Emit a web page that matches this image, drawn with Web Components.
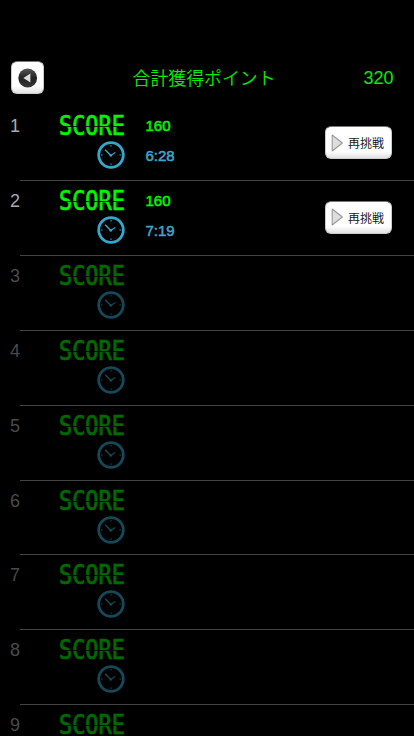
<!DOCTYPE html>
<html lang="ja"><head><meta charset="utf-8"><title>合計獲得ポイント</title>
<style>html,body{margin:0;background:#000;height:736px;overflow:hidden}</style></head><body>
<score-screen></score-screen>
<script>
const define=(name,html,setup)=>customElements.define(name,class extends HTMLElement{
  connectedCallback(){
    if(this.shadowRoot)return;
    const t=document.createElement('template');t.innerHTML=html;
    this.attachShadow({mode:'open'}).append(t.content.cloneNode(true));
    if(setup)setup(this,this.shadowRoot);
  }
});
define('glossy-button',`<style>
:host{display:flex;box-sizing:border-box;height:33px;align-items:center;border-radius:6px;border:1px solid #ccc;border-top-color:#777;background:linear-gradient(#fff 78%,#e2e2e2);color:#1a1a1a}
</style><slot></slot>`);
define('back-icon',`<style>:host{display:block;width:20px;height:20px}svg{display:block}</style>
<svg width="20" height="20"><defs><linearGradient id="b" x2="0" y2="1"><stop stop-color="#555"/><stop offset=".5" stop-color="#222"/><stop offset="1" stop-color="#383838"/></linearGradient></defs><circle cx="9.7" cy="10" r="9.4" fill="url(#b)"/><path d="M5.4 10 12.4 5.4V14.6Z" fill="#ddd"/></svg>`);
define('play-icon',`<style>:host{display:block;width:12px;height:18px}svg{display:block}</style>
<svg width="12" height="18"><path d="M1.2 1V17L11.4 9Z" fill="#ddd" stroke="#999" stroke-width="1.1" stroke-linejoin="round"/></svg>`);
define('clock-icon',`<style>:host{display:block;width:28px;height:28px}svg{display:block}</style>
<svg width="28" height="28" fill="none" stroke="#32a8cc"><circle cx="14" cy="14" r="12.3" stroke-width="2.8"/><path d="M14 4V5.6M14 22.4V24M4 14H5.6M22.4 14H24" stroke-width="1"/><path d="M8.1 8.7 13.8 14.6" stroke-width="1.4"/><path d="M13.6 14.6 18.3 11.6" stroke-width="1.2"/><circle cx="13.8" cy="14.5" r="1.3" fill="#32a8cc" stroke="none"/></svg>`);
define('lcd-label',`<style>
:host{display:block;width:72px;height:33px;margin:-5px 0 -6px;position:relative;color:#00f600}
span{display:block;width:max-content;font:400 26.4px/33px "DejaVu Sans Mono",monospace;-webkit-text-stroke:.7px currentColor;transform:scaleX(.83);transform-origin:0 0;white-space:nowrap}
:host::after{content:"";position:absolute;inset:0;background:linear-gradient(#000,#000) 0 17px/100% .8px no-repeat}
</style><span><slot></slot></span>`);
define('score-row',`<style>
:host{display:grid;box-sizing:border-box;height:74.92px;grid-template-columns:59px 86px 180px 67px;position:relative;font-family:"Liberation Sans",Arial,sans-serif}
:host::after{content:"";position:absolute;left:20px;right:0;bottom:-1px;height:1px;background:#444}
.rank{padding:11px 0 0 10px;font-size:18px;line-height:20px;color:#aaa}
.labels{padding-top:9px;display:flex;flex-direction:column;gap:5px}
clock-icon{margin-left:37.5px}
.vals{padding:11px 0 0 .5px;-webkit-text-stroke:.55px currentColor;font-size:15px;line-height:20px;display:flex;flex-direction:column;gap:10px}
.pts{color:#00f600}.time{color:#3aa7c8}
.act{padding-top:21px}
glossy-button{padding-left:5px;gap:5px;font:12px "Noto Sans CJK JP",sans-serif;white-space:nowrap}
:host([empty]) .rank{color:#4a4a4a}
:host([empty]) .labels{opacity:.43}
</style><div class="rank"></div><div class="labels"><lcd-label>SCORE</lcd-label><clock-icon></clock-icon></div>
<div class="vals"><div class="pts"></div><div class="time"></div></div>
<div class="act"><glossy-button><play-icon></play-icon><span>再挑戦</span></glossy-button></div>`,(h,s)=>{
  s.querySelector('.rank').textContent=h.getAttribute('rank');
  if(h.hasAttribute('points')){
    s.querySelector('.pts').textContent=h.getAttribute('points');
    s.querySelector('.time').textContent=h.getAttribute('time');
  }else{h.setAttribute('empty','');s.querySelector('.vals').remove();s.querySelector('.act').remove()}
});
define('score-header',`<style>
:host{display:grid;grid-template-columns:120px 1fr 120px;align-items:center;height:55px;padding-top:50px;color:#00f000;font:18px/28px "Liberation Sans","Noto Sans CJK JP",sans-serif}
glossy-button{width:33px;justify-content:center;margin-left:11px}
.title{font-family:"Noto Sans CJK JP",sans-serif;font-weight:350;font-size:17.9px;padding:0 0 2px 12.5px;white-space:nowrap}
.total{text-align:right;padding-right:20.5px}
</style><glossy-button><back-icon></back-icon></glossy-button><div class="title">合計獲得ポイント</div><div class="total">320</div>`);
define('score-screen',`<style>:host{display:block;width:414px;height:736px;overflow:hidden;background:#000}</style>
<score-header></score-header>
<score-row rank="1" points="160" time="6:28"></score-row><score-row rank="2" points="160" time="7:19"></score-row>
<score-row rank="3"></score-row><score-row rank="4"></score-row><score-row rank="5"></score-row><score-row rank="6"></score-row><score-row rank="7"></score-row><score-row rank="8"></score-row><score-row rank="9"></score-row>`);
</script></body></html>
